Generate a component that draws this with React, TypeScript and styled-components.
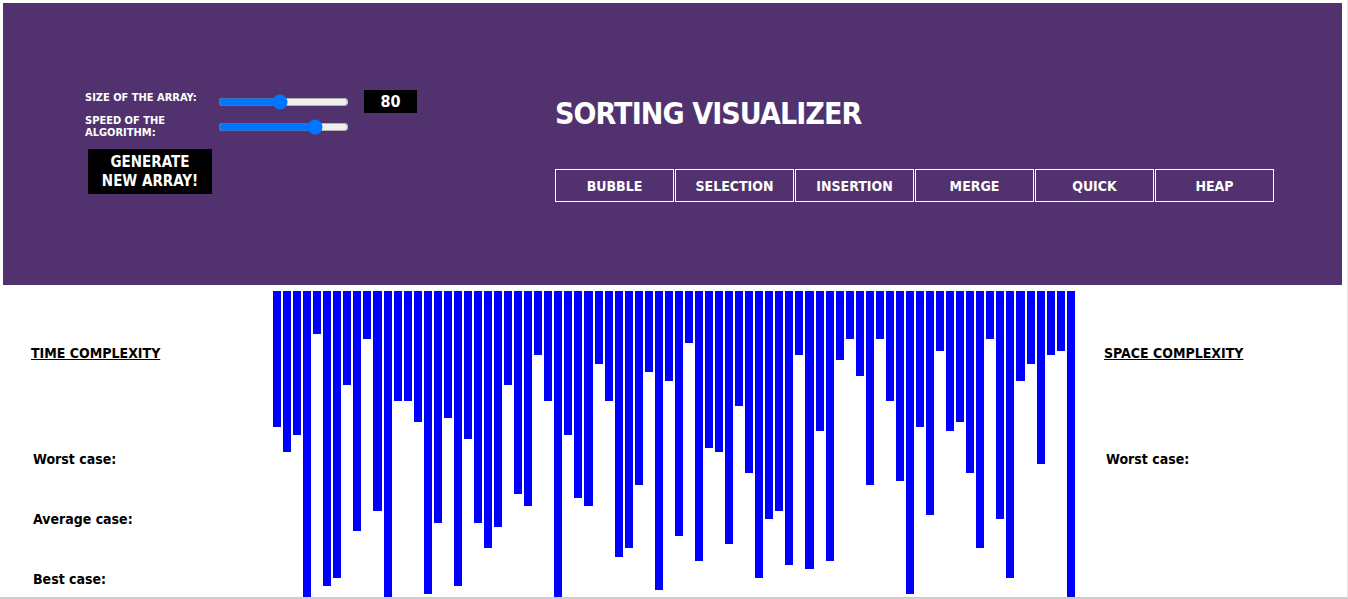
import React from "react";
import styled, { createGlobalStyle } from "styled-components";

const GlobalStyle = createGlobalStyle`
  html, body {
    margin: 0;
    padding: 0;
    overflow: hidden;
    background: #ffffff;
  }
  body {
    font-family: "DejaVu Sans Condensed", "DejaVu Sans", sans-serif;
  }
`;

const Frame = styled.div`
  box-sizing: border-box;
  width: 1348px;
  height: 599px;
  padding: 3px 0 0 3px;
  border-right: 1px solid #e4e4e4;
  border-bottom: 2px solid #cdcdcd;
  overflow: hidden;
`;

const Header = styled.header`
  width: 1339px;
  height: 282px;
  background: #51326e;
  color: #ffffff;
  display: flex;
  align-items: flex-start;
`;

const Controls = styled.div`
  margin: 87px 0 0 82px;
  width: 470px;
  display: flex;
  flex-direction: column;
`;

const ControlRow = styled.div<{ $gap?: number }>`
  display: flex;
  align-items: center;
  margin-top: ${(p) => p.$gap ?? 0}px;
`;

const Label = styled.label<{ $offset?: number }>`
  width: 133px;
  font-size: 11px;
  line-height: 12px;
  font-weight: bold;
  text-transform: uppercase;
  align-self: flex-start;
  margin-top: ${(p) => p.$offset ?? 0}px;
`;

const Slider = styled.input`
  width: 131px;
  height: 16px;
  margin: 0;
`;

const ValueBox = styled.div`
  margin-left: 15px;
  width: 53px;
  height: 23px;
  background: #000000;
  color: #ffffff;
  font-size: 16px;
  font-weight: bold;
  display: flex;
  align-items: center;
  justify-content: center;
`;

const GenerateButton = styled.button`
  margin: 10px 0 0 3px;
  width: 124px;
  height: 45px;
  padding: 0;
  border: none;
  background: #000000;
  color: #ffffff;
  font-family: inherit;
  font-size: 15px;
  line-height: 19px;
  font-weight: bold;
  text-transform: uppercase;
  cursor: pointer;
`;

const TitleArea = styled.div`
  margin: 91px 0 0 0;
  display: flex;
  flex-direction: column;
`;

const Title = styled.h1`
  margin: 0;
  font-size: 30px;
  line-height: 40px;
  font-weight: bold;
  letter-spacing: -0.9px;
`;

const AlgoRow = styled.div`
  margin-top: 35px;
  display: flex;
  gap: 1px;
`;

const AlgoButton = styled.button`
  width: 119px;
  height: 33px;
  box-sizing: border-box;
  border: 1px solid #ffffff;
  background: transparent;
  color: #ffffff;
  font-family: inherit;
  font-size: 14px;
  font-weight: bold;
  cursor: pointer;
`;

const Main = styled.main`
  margin-top: 6px;
  display: flex;
  align-items: flex-start;
`;

const SidePanel = styled.section<{ $width: number; $pad: number }>`
  width: ${(p) => p.$width}px;
  box-sizing: border-box;
  padding-left: ${(p) => p.$pad}px;
  display: flex;
  flex-direction: column;
`;

const SideHeading = styled.h3`
  margin: 54px 0 0 0;
  font-size: 14px;
  line-height: 17px;
  font-weight: bold;
  text-decoration: underline;
  color: #000000;
`;

const CaseText = styled.p<{ $top: number }>`
  margin: ${(p) => p.$top}px 0 0 2px;
  font-size: 14px;
  line-height: 17px;
  font-weight: bold;
  color: #000000;
`;

const Bars = styled.div`
  width: 804px;
  display: flex;
  align-items: flex-start;
`;

const Bar = styled.div`
  flex: 0 0 8.05px;
  margin: 0 1px;
  background: #0000ff;
`;

const heights = [
  136, 161, 144, 320, 43, 295, 287, 94, 240, 48, 220, 320, 110, 110, 131, 303,
  232, 127, 295, 148, 232, 257, 236, 94, 203, 215, 64, 110, 320, 144, 207, 215,
  73, 110, 266, 257, 194, 81, 299, 90, 245, 52, 270, 157, 161, 253, 115, 182,
  287, 228, 220, 274, 64, 278, 140, 270, 69, 48, 85, 194, 48, 110, 190, 303,
  136, 224, 60, 140, 131, 182, 257, 48, 228, 287, 90, 73, 173, 64, 60, 320,
];

const algorithms = ["BUBBLE", "SELECTION", "INSERTION", "MERGE", "QUICK", "HEAP"];

export default function App() {
  return (
    <>
      <GlobalStyle />
      <Frame>
        <Header>
          <Controls>
            <ControlRow>
              <Label $offset={2}>Size of the array:</Label>
              <Slider type="range" min={10} max={160} defaultValue={80} />
              <ValueBox>80</ValueBox>
            </ControlRow>
            <ControlRow $gap={2}>
              <Label>
                Speed of the
                <br />
                algorithm:
              </Label>
              <Slider type="range" min={1} max={10} defaultValue={8} />
            </ControlRow>
            <ControlRow>
              <GenerateButton>
                Generate
                <br />
                new array!
              </GenerateButton>
            </ControlRow>
          </Controls>
          <TitleArea>
            <Title>SORTING VISUALIZER</Title>
            <AlgoRow>
              {algorithms.map((a) => (
                <AlgoButton key={a}>{a}</AlgoButton>
              ))}
            </AlgoRow>
          </TitleArea>
        </Header>
        <Main>
          <SidePanel $width={269} $pad={28}>
            <SideHeading>TIME COMPLEXITY</SideHeading>
            <CaseText $top={89}>Worst case:</CaseText>
            <CaseText $top={43}>Average case:</CaseText>
            <CaseText $top={43}>Best case:</CaseText>
          </SidePanel>
          <Bars>
            {heights.map((h, i) => (
              <Bar key={i} style={{ height: `${h}px` }} />
            ))}
          </Bars>
          <SidePanel $width={266} $pad={28}>
            <SideHeading>SPACE COMPLEXITY</SideHeading>
            <CaseText $top={89}>Worst case:</CaseText>
          </SidePanel>
        </Main>
      </Frame>
    </>
  );
}
